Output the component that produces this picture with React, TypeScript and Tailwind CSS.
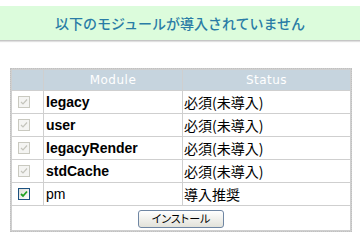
import React from "react";

const modules = [
  { name: "legacy", status: "必須(未導入)", required: true },
  { name: "user", status: "必須(未導入)", required: true },
  { name: "legacyRender", status: "必須(未導入)", required: true },
  { name: "stdCache", status: "必須(未導入)", required: true },
  { name: "pm", status: "導入推奨", required: false },
];

const CheckBox = ({ disabled }: { disabled: boolean }) => (
  <div
    className={
      disabled
        ? "w-[12px] h-[12px] border border-[#c9c9c0] bg-[#f4f4f2] flex items-center justify-center"
        : "w-[12px] h-[12px] border border-[#1c5180] bg-gradient-to-br from-[#dcdcd6] to-white flex items-center justify-center"
    }
  >
    <svg width="8" height="8" viewBox="0 0 8 8">
      <path
        d="M1 4 L3 6 L7 1.5"
        fill="none"
        stroke={disabled ? "#c4c4bc" : "#21a121"}
        strokeWidth={disabled ? 1.2 : 1.8}
      />
    </svg>
  </div>
);

const App = () => {
  return (
    <div className="w-[360px] h-[242px] bg-white pt-[6px] font-['Liberation_Sans','Noto_Sans_CJK_JP',sans-serif]">
      {/* Message banner */}
      <div className="h-[35px] bg-[#dcfcdc] border-b border-[#c6c6c6] shadow-[0_1px_1px_rgba(0,0,0,0.12)] flex items-center justify-center">
        <span className="text-[14px] font-medium text-[#2a7ca6] font-['Noto_Sans_CJK_JP',sans-serif]">
          以下のモジュールが導入されていません
        </span>
      </div>

      {/* Module table */}
      <table className="ml-[10px] mt-[27px] w-[342px] border-separate border-spacing-[1px] bg-[#cfcfcf] border border-dotted border-[#c0c0c0] table-fixed">
        <thead>
          <tr>
            <th className="w-[31px] h-[20px] bg-[#c6d4de]"></th>
            <th className="w-[138px] h-[20px] bg-[#c6d4de] text-white text-[12px] font-normal tracking-[0.5px] font-['DejaVu_Sans',sans-serif]">
              Module
            </th>
            <th className="h-[20px] bg-[#c6d4de] text-white text-[12px] font-normal tracking-[0.5px] font-['DejaVu_Sans',sans-serif]">
              Status
            </th>
          </tr>
        </thead>
        <tbody>
          {modules.map(m => (
            <tr key={m.name}>
              <td className="h-[22px] bg-white pl-[6px] align-middle">
                <CheckBox disabled={m.required} />
              </td>
              <td
                className={
                  m.required
                    ? "h-[22px] bg-white pl-[2px] text-[14px] font-bold text-black"
                    : "h-[22px] bg-white pl-[2px] text-[14px] text-black"
                }
              >
                {m.name}
              </td>
              <td className="h-[22px] bg-white pl-[1px] text-[14px] text-black font-['Noto_Sans_CJK_JP',sans-serif]">
                {m.status}
              </td>
            </tr>
          ))}
          <tr>
            <td colSpan={3} className="h-[22px] bg-white text-center align-middle">
              <button className="w-[86px] h-[18px] rounded-[3px] border border-[#6f86a3] bg-gradient-to-b from-white to-[#e2e2da] text-[11px] leading-none text-black font-['Noto_Sans_CJK_JP',sans-serif] [font-feature-settings:'palt']">
                インストール
              </button>
            </td>
          </tr>
        </tbody>
      </table>
    </div>
  );
};

export default App;
